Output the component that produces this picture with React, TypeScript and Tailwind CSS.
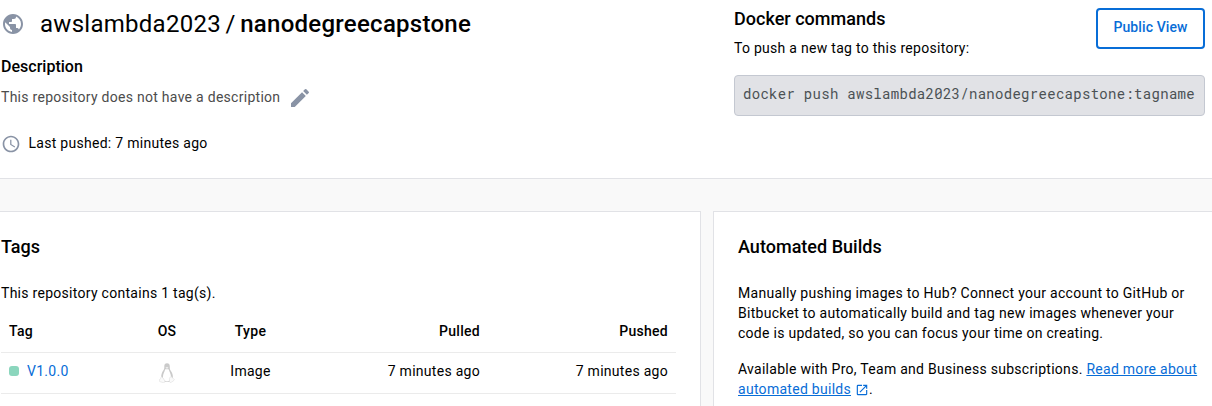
import React from 'react';
import { MdPublic, MdEdit, MdAccessTime, MdOpenInNew } from 'react-icons/md';

function LinuxIcon() {
  return (
    <svg width="16" height="20" viewBox="0 0 16 20" className="block">
      <path d="M8 .2C6.200.2 5.300 1.300 5.300 3.200c.1 2.200-.1 3.100-1.200 4.600C3 9.500 2 11.700 2.200 14.500l2.800 4.300h6l2.900-4.300c.1-2.600-.8-4.900-2.100-6.700-.9-1.300-1-2.300-1-4.400C10.700 1.400 9.900.2 8 .2z" fill="#cacaca" />
      <path d="M7.900 6.300c-.8 0-1.400-.3-1.800.2-.2 1.800-2.200 4.200-2.200 7.500 0 2.800 1.600 4.300 4.100 4.300s4-1.500 4-4.300c0-3.300-1.800-5.400-2.300-7.500-.3-.5-1-.2-1.800-.2z" fill="#fff" />
      <path d="M6.400 4.600 8 3.800l1.500.8L8 5.900z" fill="#ececec" />
      <path d="M2.900 13.700 5.700 17.400c.6 1.300-.1 2.400-1.400 2.200L1 18.700c-.9-.3-.5-1.100-.5-1.800 0-1 .8-.8 1.200-1.600.2-.6.4-1.600 1.200-1.600zM13 14c.3 1.200.9 1.500 1.800 1.900.8.5.7.9.1 1.500-.8.8-1.600 1.100-2.300 1.700-1.200.9-2.200.3-2.200-1l.1-2.800c.2-1.500 2-1.700 2.500-1.300z" fill="#fafafa" stroke="#dedede" strokeWidth=".6" />
    </svg>
  );
}

const columns = 'grid w-[675px] grid-cols-[139px_54px_113px_173px_188px] border-b border-[#ebebeb]';

export default function App() {
  return (
    <div className="h-[406px] w-[1212px] overflow-hidden bg-[#f9f9f9] font-['Roboto',sans-serif] text-sm leading-5 tracking-[0.28px] text-black">
      <header className="flex h-[179px] justify-between border-b border-[#e1e2e6] bg-white pr-[7px]">
        <div className="pl-px">
          <div className="flex h-12 items-center">
            <MdPublic className="size-6 text-[#8993a5]" />
            <h1 className="ml-[15px] text-2xl leading-8 tracking-[0.27px] [word-spacing:-1.7px]">
              awslambda2023 / <span className="font-medium">nanodegreecapstone</span>
            </h1>
          </div>
          <h2 className="mt-[9px] text-base leading-5 font-medium tracking-[0.01px]">Description</h2>
          <div className="mt-[9px] flex h-6 items-center">
            <p className="-mt-[2px] text-[#4c4c4c]">This repository does not have a description</p>
            <MdEdit className="ml-2 size-6 text-[#8993a5]" />
          </div>
          <div className="mt-6 flex items-center">
            <MdAccessTime className="size-5 text-[#8993a5]" />
            <p className="-mt-[2px] ml-[7.500px]">Last pushed: 7 minutes ago</p>
          </div>
        </div>
        <div className="w-[471px] pt-2">
          <div className="flex h-[67px] justify-between">
            <div>
              <h2 className="text-lg leading-[22px] font-medium tracking-[0.02px]">Docker commands</h2>
              <p className="mt-2">To push a new tag to this repository:</p>
            </div>
            <button className="h-[41px] w-[109px] rounded border-2 border-[#086dd7] pb-[3px] font-medium tracking-[0.1px] text-[#086dd7]">Public View</button>
          </div>
          <div className="flex h-[41px] items-center rounded border border-[#c4c8d1] bg-[#e1e2e6] px-2 pb-[3px] font-['Roboto_Mono','Liberation_Mono',monospace] tracking-[0.29px] whitespace-pre text-[#4b5154]">docker push awslambda2023/nanodegreecapstone:tagname</div>
        </div>
      </header>
      <main className="flex gap-3 pt-8">
        <section className="h-[195px] w-[701px] border-t border-r border-[#e1e2e6] bg-white pl-px">
          <h2 className="mt-6 text-lg leading-[22px] font-medium tracking-[0.02px]">Tags</h2>
          <p className="mt-[25px]">This repository contains 1 tag(s).</p>
          <div>
            <div className={columns + ' h-[50px] items-center pt-[6px] font-medium'}>
              <span className="pl-2">Tag</span>
              <span className="text-center">OS</span>
              <span className="text-center">Type</span>
              <span className="text-right">Pulled</span>
              <span className="text-right">Pushed</span>
            </div>
            <div className={columns + ' h-[41px] items-center pb-1'}>
              <span className="flex items-center gap-2 pl-2">
                <i className="size-[10px] rounded-[3px] bg-[#8bd6bd]" />
                <a className="text-[#086dd7]">V1.0.0</a>
              </span>
              <span className="flex justify-center pt-1"><LinuxIcon /></span>
              <span className="-mt-px text-center">Image</span>
              <span className="-mt-px text-right">7 minutes ago</span>
              <span className="-mt-px text-right">7 minutes ago</span>
            </div>
          </div>
        </section>
        <section className="h-[195px] flex-1 border-t border-l border-[#e1e2e6] bg-white pl-6">
          <h2 className="mt-6 text-lg leading-[22px] font-medium tracking-[0.02px]">Automated Builds</h2>
          <p className="mt-[25px] whitespace-nowrap">
            Manually pushing images to Hub? Connect your account to GitHub or<br />
            Bitbucket to automatically build and tag new images whenever your<br />
            code is updated, so you can focus your time on creating.
          </p>
          <p className="mt-4 whitespace-nowrap">
            Available with Pro, Team and Business subscriptions. <a className="text-[#086dd7] underline">Read more about</a><br />
            <a className="text-[#086dd7] underline">automated builds</a>
            <MdOpenInNew className="ml-1 inline size-[14px] text-[#086dd7]" />.
          </p>
        </section>
      </main>
    </div>
  );
}
